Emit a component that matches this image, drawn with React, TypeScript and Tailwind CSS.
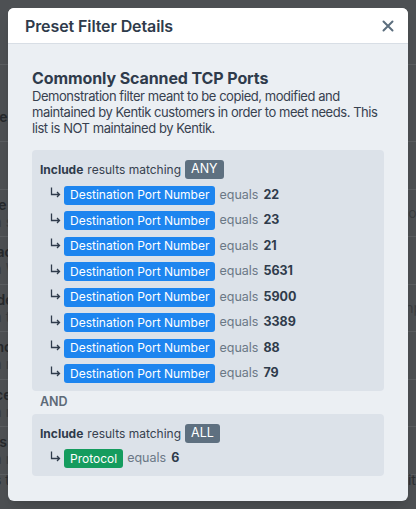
import React from "react";

const ports = ["22", "23", "21", "5631", "5900", "3389", "88", "79"];

// background page rows (mostly hidden behind the dialog)
const bgRows = [
  { top: "54", sub: "", right: "" },
  { top: "Device name", sub: "se", right: "or" },
  { top: "Interface", sub: "W", right: "" },
  { top: "Exclude", sub: "th", right: "np" },
  { top: "Common", sub: "ra", right: "" },
  { top: "Services", sub: "nd", right: "" },
  { top: "Routes", sub: "nd", right: "" },
];

const Arrow = () => (
  <svg width="11" height="11" viewBox="0 0 11 11" className="-mt-[5px] text-[#2f3b4b] shrink-0">
    <path d="M1.5 0.5V7.5H9.5M7 5L9.5 7.5L7 10" fill="none" stroke="currentColor" strokeWidth="1.3" />
  </svg>
);

const Badge = ({ children }: { children: React.ReactNode }) => (
  <span className="ml-[4px] rounded-[3px] bg-[#5e7080] px-[6px] h-[19px] flex items-center text-[12.5px] text-white">
    {children}
  </span>
);

const Row = ({ label, value, color }: { label: string; value: string; color: string }) => (
  <div className="flex items-center h-[19px] pl-[10px] whitespace-nowrap">
    <Arrow />
    <span className={`ml-[3px] h-[19px] rounded-[3px] ${color} px-[6px] flex items-center text-[12px] text-white`}>
      {label}
    </span>
    <span className="ml-[4px] text-[12.5px] text-[#6b7886]">equals</span>
    <span className="ml-[5px] text-[12.5px] font-bold text-[#2f3b4b]">{value}</span>
  </div>
);

export default function App() {
  return (
    <div
      className="relative w-[416px] h-[509px] overflow-hidden bg-[#4d5053]"
      style={{ fontFamily: "Inter, 'Noto Sans', sans-serif" }}
    >
      {/* page behind the overlay */}
      <div className="flex flex-col text-[#26292c]">
        <div className="h-[65px] border-b border-[#5b5e61]" />
        <div className="h-[77px] border-b border-[#5b5e61] flex items-end pb-[14px]">
          <span className="-ml-[32px] text-[14px] font-semibold">Name</span>
        </div>
        {bgRows.map((r, i) => (
          <div key={i} className="h-[47.5px] border-b border-[#5b5e61] flex items-center justify-between">
            <div className="-ml-[40px] flex flex-col leading-[17px] text-[14px]">
              <span className="font-semibold">{r.top}</span>
              <span className="text-[#3a3d40]">{r.sub ? "Lorem " + r.sub : ""}</span>
            </div>
            <span className="-mr-[6px] text-[14px] text-[#3a3d40]">{r.right}</span>
          </div>
        ))}
        <div className="-mt-[6px] -ml-[6px] whitespace-nowrap text-[14px] text-[#2c2f32]">
          s to exclude any results that don't have a matching Ultimate Exit Device Name
        </div>
      </div>

      {/* dialog */}
      <div className="absolute left-[8px] top-[8px] w-[400px] h-[493px] rounded-[6px] overflow-hidden bg-[#ebeff3] flex flex-col shadow-lg">
        <div className="h-[36px] bg-white border-b border-[#d8dee5] flex items-center justify-between pl-[17px] pr-[14px]">
          <h2 className="text-[16px] font-semibold tracking-[-0.1px] text-[#2f3b4b]">Preset Filter Details</h2>
          <svg width="12" height="12" viewBox="0 0 12 12" className="text-[#5c6e7e]">
            <path d="M1.5 1.5l9 9M10.5 1.5l-9 9" stroke="currentColor" strokeWidth="2" strokeLinecap="round" />
          </svg>
        </div>

        <div className="flex-1 px-[24px] pt-[24px]">
          <h3 className="text-[16px] leading-[20px] font-bold tracking-[-0.1px] text-[#2f3b4b]">
            Commonly Scanned TCP Ports
          </h3>
          <p className="text-[13px] leading-[16px] tracking-[-0.45px] text-[#37414f]">
            Demonstration filter meant to be copied, modified and maintained by Kentik customers in order to meet
            needs. This list is NOT maintained by Kentik.
          </p>

          <div className="mt-[14px] rounded-[4px] bg-[#dce2e9] px-[8px] pt-[10px] pb-[8px] flex flex-col gap-[6.5px]">
            <div className="flex items-center h-[19px] text-[12px] text-[#37414f]">
              <span className="font-bold text-[#2f3b4b]">Include</span>
              <span className="ml-[4px]">results matching</span>
              <Badge>ANY</Badge>
            </div>
            {ports.map((p) => (
              <Row key={p} label="Destination Port Number" value={p} color="bg-[#1d85ef]" />
            ))}
          </div>

          <div className="h-[23px] flex items-center pl-[8px] text-[12.5px] font-semibold text-[#5d6a78]">AND</div>

          <div className="rounded-[4px] bg-[#dce2e9] px-[8px] pt-[10px] pb-[8px] flex flex-col gap-[6px]">
            <div className="flex items-center h-[19px] text-[12px] text-[#37414f]">
              <span className="font-bold text-[#2f3b4b]">Include</span>
              <span className="ml-[4px]">results matching</span>
              <Badge>ALL</Badge>
            </div>
            <Row label="Protocol" value="6" color="bg-[#159c5e]" />
          </div>
        </div>
      </div>
    </div>
  );
}
